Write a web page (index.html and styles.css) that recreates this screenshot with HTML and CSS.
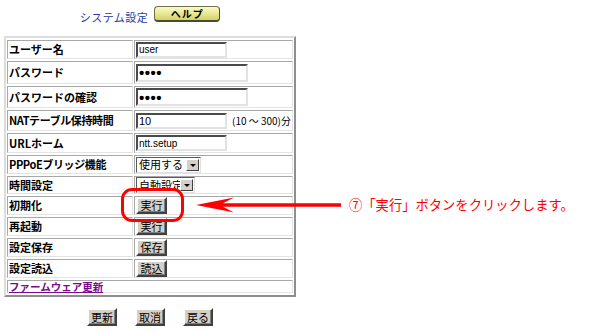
FILE: index.html
```html
<!DOCTYPE html>
<html lang="ja">
<head>
  <meta charset="UTF-8">
  <meta name="viewport" content="width=device-width, initial-scale=1.0">
  <title>システム設定</title>
  <link rel="stylesheet" href="styles.css">
</head>
<body>
  <div class="page">
    <div class="panel">
      <div class="title">
        <span class="title-text">システム設定</span>
        <a class="help-btn" href="javascript:;">ヘルプ</a>
      </div>
      <table class="settings">
        <colgroup>
          <col class="col-label">
          <col class="col-value">
        </colgroup>
        <tbody>
          <tr class="r1">
            <th>ユーザー名</th>
            <td><input type="text" class="field field-user" value="user"></td>
          </tr>
          <tr class="r2">
            <th>パスワード</th>
            <td><input type="password" class="field field-pass" value="1234"></td>
          </tr>
          <tr class="r3">
            <th>パスワードの確認</th>
            <td><input type="password" class="field field-pass" value="1234"></td>
          </tr>
          <tr class="r4">
            <th class="narrow">NATテーブル保持時間</th>
            <td><input type="text" class="field field-nat" value="10"><span class="unit">(10 ～ 300)分</span></td>
          </tr>
          <tr class="r5">
            <th>URLホーム</th>
            <td><input type="text" class="field field-url" value="ntt.setup"></td>
          </tr>
          <tr class="r6">
            <th class="narrow">PPPoEブリッジ機能</th>
            <td>
              <span class="combo combo-bridge">
                <select><option>使用する</option><option>使用しない</option></select>
                <span class="combo-arrow"></span>
              </span>
            </td>
          </tr>
          <tr class="r7">
            <th>時間設定</th>
            <td>
              <span class="combo combo-time">
                <select><option>自動設定</option><option>手動設定</option></select>
                <span class="combo-arrow"></span>
              </span>
            </td>
          </tr>
          <tr class="r8">
            <th>初期化</th>
            <td><button class="btn btn-small">実行</button></td>
          </tr>
          <tr class="r9">
            <th>再起動</th>
            <td><button class="btn btn-small">実行</button></td>
          </tr>
          <tr class="r10">
            <th>設定保存</th>
            <td><button class="btn btn-small">保存</button></td>
          </tr>
          <tr class="r11">
            <th>設定読込</th>
            <td><button class="btn btn-small">読込</button></td>
          </tr>
          <tr class="r12">
            <th colspan="2"><a class="firmware" href="javascript:;">ファームウェア更新</a></th>
          </tr>
        </tbody>
      </table>
      <div class="actions">
        <button class="btn btn-action">更新</button>
        <button class="btn btn-action">取消</button>
        <button class="btn btn-action">戻る</button>
      </div>
    </div>

    <!-- 説明用の注記 -->
    <div class="mark"></div>
    <div class="note">
      <svg class="note-arrow" width="145" height="18" viewBox="0 0 145 18">
        <path d="M0 9 L38 1.5 L27 7.3 L145 7.3 L145 10.7 L27 10.7 L38 16.5 Z" fill="#ff0000"/>
      </svg>
      <span class="note-text">⑦「実行」ボタンをクリックします。</span>
    </div>
  </div>
</body>
</html>
```

FILE: styles.css
```css
* {
  margin: 0;
  padding: 0;
  box-sizing: border-box;
}
body {
  background-color: #fff;
  font-family: "Noto Sans CJK JP", "Liberation Sans", sans-serif;
  color: #000;
}
.page {
  position: relative;
  width: 600px;
  height: 332px;
  overflow: hidden;
}
.panel {
  width: 300px;
  padding-left: 4px;
}
.title {
  width: 292px;
  height: 36px;
  display: flex;
  justify-content: center;
  align-items: flex-start;
  gap: 6px;
}
.title-text {
  margin-top: 11px;
  font-size: 11px;
  line-height: 13px;
  color: #2b3aa8;
  letter-spacing: 0.5px;
}
.help-btn {
  margin-top: 6px;
  width: 66px;
  height: 16px;
  display: flex;
  align-items: center;
  justify-content: center;
  font-size: 10px;
  font-weight: bold;
  color: #000;
  text-decoration: none;
  border: 1px solid #6f6f4a;
  border-right-color: #4a4a30;
  border-bottom: 2px solid #4a4a30;
  border-radius: 4px;
  background: linear-gradient(#fafac8, #e6e690 55%, #d2d26a);
  letter-spacing: 1px;
}

/* 設定テーブル */
.settings {
  width: 292px;
  table-layout: fixed;
  border-collapse: separate;
  border-spacing: 1px 2px;
  border: 2px solid;
  border-color: #dcdcdc #8e8e8e #8e8e8e #dcdcdc;
}
.col-label {
  width: 126px;
}
.settings th,
.settings td {
  border: 1px solid;
  border-color: #a8a8a8 #e4e4e4 #e4e4e4 #a8a8a8;
  vertical-align: middle;
  white-space: nowrap;
  overflow: hidden;
}
.settings th {
  padding: 0 0 0 1px;
  text-align: left;
  font-size: 11px;
  line-height: 13px;
  font-weight: bold;
}
.settings th.narrow {
  letter-spacing: -0.4px;
}
.settings td {
  padding: 0 0 0 1px;
  font-size: 11px;
  line-height: 13px;
}
.r1 { height: 19px; }
.r2 { height: 23px; }
.r3 { height: 22px; }
.r4 { height: 21px; }
.r5 { height: 20px; }
.r6 { height: 19px; }
.r7 { height: 18px; }
.r8 { height: 18px; }
.r9 { height: 18px; }
.r10 { height: 19px; }
.r11 { height: 19px; }
.r12 { height: 13px; }
.settings .r12 th {
  line-height: 11px;
  overflow: visible;
}

.field {
  display: block;
  height: 16px;
  border: 2px solid;
  border-color: #4a4a4a #e2e2e2 #e2e2e2 #4a4a4a;
  background-color: #fff;
  font-family: "Liberation Sans", Arial, sans-serif;
  font-size: 10px;
  color: #000;
  padding: 0 1px;
  outline: none;
}
.field-user,
.field-nat,
.field-url {
  width: 91px;
}
.field-pass {
  width: 112px;
  height: 18px;
  font-size: 15px;
  font-weight: bold;
  letter-spacing: 0.5px;
}
.field-nat {
  display: inline-block;
  vertical-align: middle;
  font-size: 11px;
}
.unit {
  display: inline-block;
  vertical-align: middle;
  margin-left: 5px;
  font-size: 10px;
  font-family: "Noto Sans CJK JP", "Liberation Sans", sans-serif;
}

/* セレクト */
.combo {
  display: inline-flex;
  align-items: center;
  height: 16px;
  border: 1px solid;
  border-color: #5a5a5a #e0e0e0 #e0e0e0 #5a5a5a;
  background-color: #fff;
  vertical-align: middle;
}
.combo-bridge {
  width: 65px;
}
.combo-time {
  width: 59px;
}
.combo select {
  flex: 1;
  min-width: 0;
  appearance: none;
  -webkit-appearance: none;
  border: none;
  background: transparent;
  font-family: "Noto Sans CJK JP", sans-serif;
  font-size: 11px;
  line-height: 13px;
  padding-left: 2px;
  color: #000;
  outline: none;
}
.combo-arrow {
  width: 13px;
  height: 12px;
  margin-right: 1px;
  background-color: #d4d0c8;
  border: 1px solid;
  border-color: #fff #404040 #404040 #fff;
  display: flex;
  align-items: center;
  justify-content: center;
}
.combo-arrow::after {
  content: "";
  border-left: 3px solid transparent;
  border-right: 3px solid transparent;
  border-top: 3px solid #000;
  margin-top: 1px;
}

/* ボタン */
.btn {
  display: inline-flex;
  align-items: center;
  justify-content: center;
  background-color: #d4d0c8;
  border: 2px solid;
  border-color: #fff #404040 #404040 #fff;
  box-shadow: inset -1px -1px 0 #808080;
  font-family: "Noto Sans CJK JP", sans-serif;
  font-size: 11px;
  line-height: 13px;
  color: #000;
  vertical-align: middle;
}
.btn-small {
  width: 31px;
  height: 17px;
}
.btn-action {
  width: 30px;
  height: 18px;
}

.firmware {
  font-size: 10.5px;
  font-weight: bold;
  color: #7a0a8a;
  text-decoration: underline;
}

.actions {
  width: 292px;
  display: flex;
  justify-content: center;
  gap: 18px;
  padding-top: 11px;
}

/* 注記 */
.mark {
  position: absolute;
  left: 121px;
  top: 188px;
  width: 63px;
  height: 34px;
  border: 3px solid #ff0000;
  border-radius: 11px;
}
.note {
  position: absolute;
  left: 196px;
  top: 196px;
  display: flex;
  align-items: center;
  gap: 8px;
}
.note-arrow {
  display: block;
}
.note-text {
  font-size: 13.3px;
  line-height: 18px;
  color: #ff0000;
  white-space: nowrap;
}
```
